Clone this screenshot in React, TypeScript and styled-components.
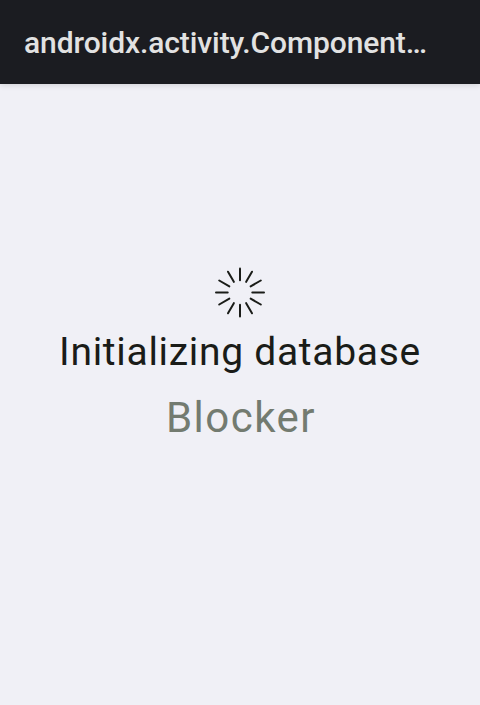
import React from 'react';
import styled, { createGlobalStyle } from 'styled-components';

const GlobalStyle = createGlobalStyle`
  * { box-sizing: border-box; }
  body { margin: 0; background: #f0f0f6; font-family: Roboto, sans-serif; }
`;

const Screen = styled.div`
  display: flex;
  flex-direction: column;
  height: 705px;
  overflow: hidden;
`;

const AppBar = styled.header`
  display: flex;
  align-items: center;
  flex: none;
  height: 84px;
  padding: 2px 24px 0;
  background: #1b1c21;
  box-shadow: 0 1px 6px rgba(0, 0, 0, 0.14);
`;

const Title = styled.h1`
  margin: 0;
  color: #e2e2e2;
  font-size: 30px;
  font-weight: 500;
  line-height: 40px;
  letter-spacing: -0.09px;
  white-space: nowrap;
`;

const Content = styled.main`
  display: flex;
  flex-direction: column;
  align-items: center;
  padding-top: 181px;
`;

const Spinner = styled.svg`
  display: block;
  width: 54px;
  height: 54px;
`;

const Message = styled.p`
  margin: 9px 0 0;
  color: #1a1c18;
  font-size: 39px;
  line-height: 48px;
  letter-spacing: 0.7px;
  white-space: nowrap;
`;

const Detail = styled.p`
  margin: 16px 0 0;
  padding-left: 2px;
  color: #737b70;
  font-size: 42px;
  line-height: 52px;
  letter-spacing: 1.5px;
  white-space: nowrap;
`;

const spokes = Array.from({ length: 12 }, (_, i) => i * 30);

export default function App() {
  return (
    <Screen>
      <GlobalStyle />
      <AppBar><Title>androidx.activity.Component…</Title></AppBar>
      <Content>
        <Spinner viewBox="-27 -27.5 54 54" stroke="#1a1c18" strokeWidth="2" strokeLinecap="round">
          {spokes.map((a) => <line key={a} x1="0" y1="-12.3" x2="0" y2="-24" transform={`rotate(${a})`} />)}
        </Spinner>
        <Message>Initializing database</Message>
        <Detail>Blocker</Detail>
      </Content>
    </Screen>
  );
}
